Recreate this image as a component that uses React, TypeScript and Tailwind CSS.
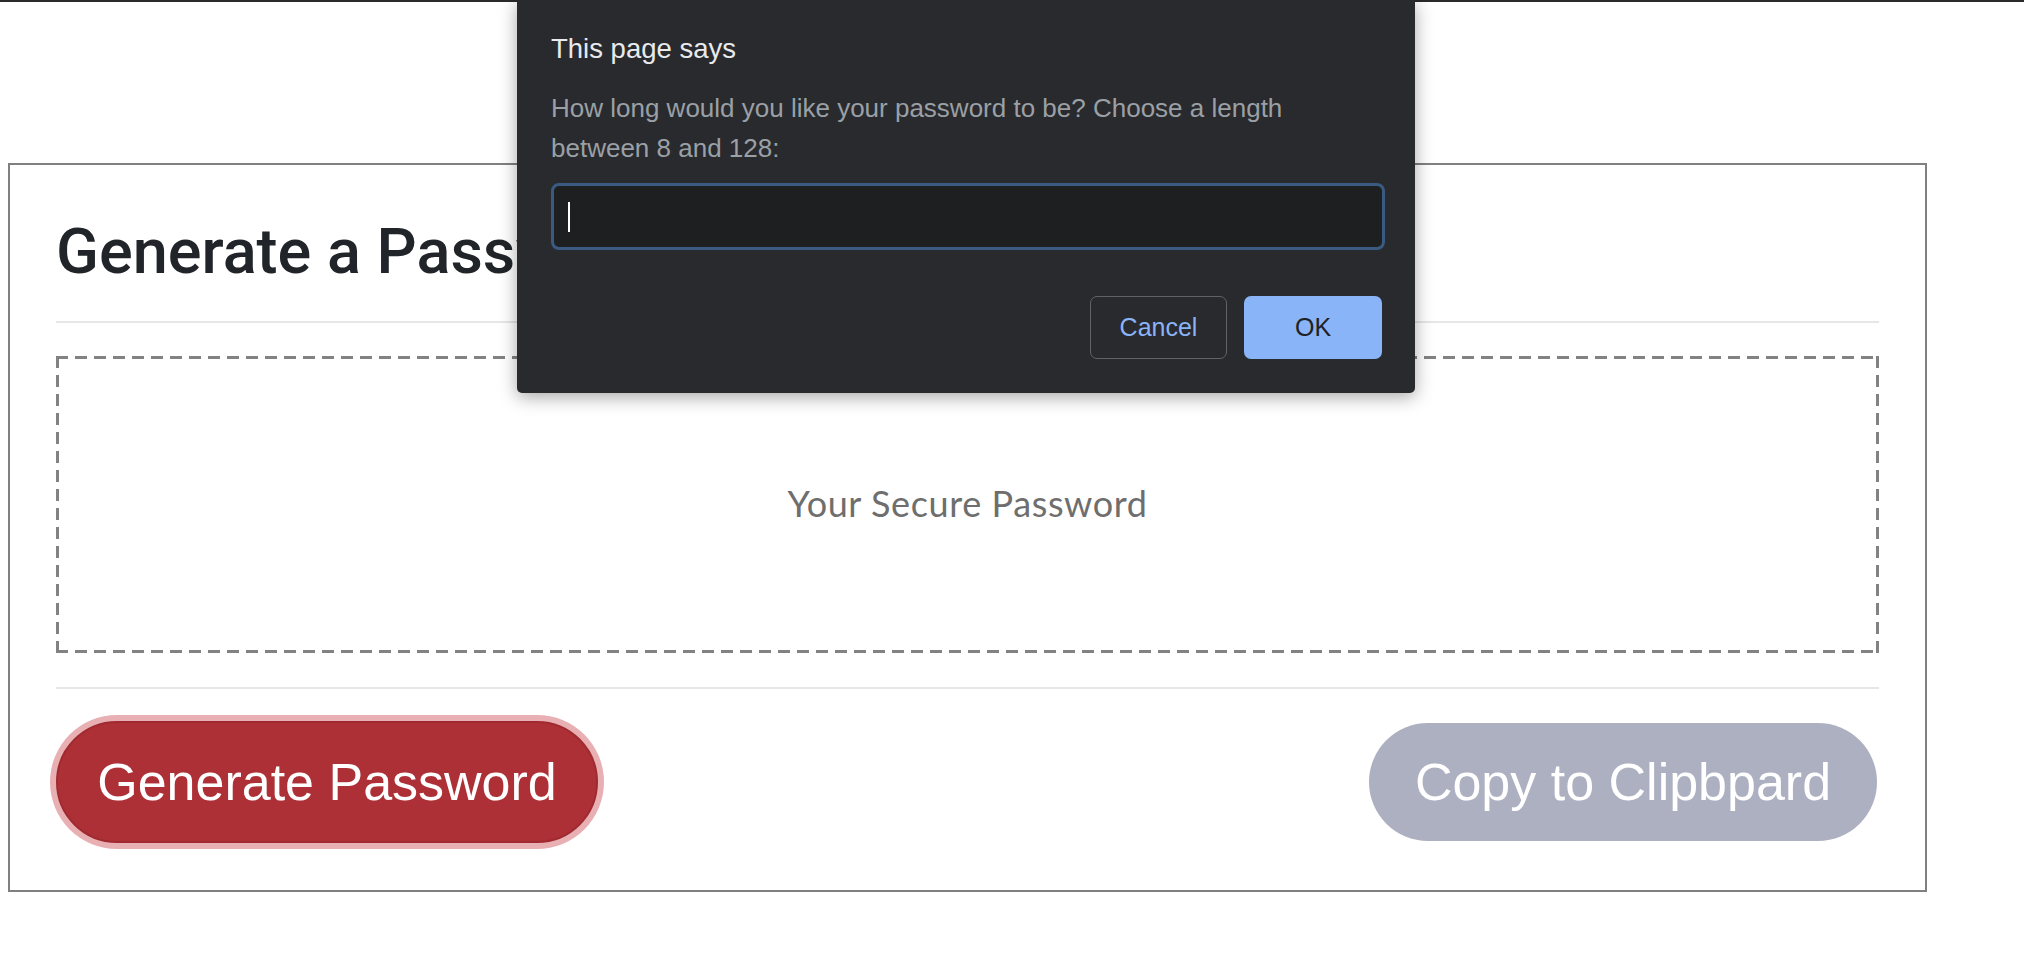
import React from 'react';

const sans = "font-['Liberation_Sans',Arial,sans-serif]";

function PromptDialog() {
  return (
    <div className="absolute left-[517px] top-0 w-[898px] h-[393px] rounded-b-[5px] bg-[#292a2d] shadow-[0_4px_18px_rgba(0,0,0,0.35)] px-[34px] pt-[31px]">
      <div className={`${sans} text-[27.5px] leading-[36px] text-[#e8eaed]`}>This page says</div>
      <p className={`${sans} mt-[21px] w-[800px] text-[26px] leading-[40px] text-[#9aa0a6]`}>
        How long would you like your password to be? Choose a length between 8 and 128:
      </p>
      <div className="mt-[15px] flex h-[67px] w-[834px] items-center rounded-[8px] border-[3px] border-[#3a5b81] bg-[#1e1f21] pl-[14px]">
        <span className="h-[30px] w-[2px] bg-white" />
      </div>
      <div className="mt-[46px] flex w-[831px] justify-end gap-[17px]">
        <button
          type="button"
          className={`${sans} h-[63px] w-[137px] rounded-[7px] border border-[#5f6368] text-[25px] text-[#8ab4f8]`}
        >
          Cancel
        </button>
        <button
          type="button"
          className={`${sans} h-[63px] w-[138px] rounded-[7px] bg-[#8ab4f8] text-[25px] text-[#202124]`}
        >
          OK
        </button>
      </div>
    </div>
  );
}

export default function App() {
  return (
    <div className="relative min-h-[972px] w-[2024px] overflow-hidden bg-white">
      <div className="h-[2px] bg-[#2a2a2a]" />

      <div className="ml-[8px] mt-[161px] h-[729px] w-[1919px] border-2 border-[#808080] px-[46px] pt-[50px]">
        <h1 className="font-['Roboto',Arial,sans-serif] text-[63px] font-medium leading-[74px] text-[#212529]">
          Generate a Password
        </h1>
        <div className="mt-[32px] h-[2px] bg-[#e6e6e6]" />

        {/* dashed frame drawn with gradients so the dash length matches */}
        <div className="mt-[33px] flex h-[297px] items-center justify-center pb-[4px] bg-no-repeat [background-image:repeating-linear-gradient(90deg,#828282_0_12px,transparent_12px_19px),repeating-linear-gradient(90deg,#828282_0_12px,transparent_12px_19px),repeating-linear-gradient(180deg,#828282_0_12px,transparent_12px_19px),repeating-linear-gradient(180deg,#828282_0_12px,transparent_12px_19px)] [background-size:100%_3px,100%_3px,3px_100%,3px_100%] [background-position:0_0,0_100%,0_0,100%_0]">
          <span className="font-['Lato','Open_Sans',sans-serif] text-[36px] tracking-[0.6px] text-[#6e6e6e]">
            Your Secure Password
          </span>
        </div>

        <div className="mt-[34px] h-[2px] bg-[#e6e6e6]" />

        <div className="mt-[32px] flex items-center justify-between">
          <button
            type="button"
            className={`${sans} h-[122px] w-[542px] rounded-full border-2 border-[#9f2a30] bg-[#ad3036] text-[52px] text-white shadow-[0_0_0_6px_#e8b0b3]`}
          >
            Generate Password
          </button>
          <button
            type="button"
            className={`${sans} mr-[2px] h-[118px] w-[508px] rounded-full bg-[#adb0c0] text-[52px] text-white`}
          >
            Copy to Clipbpard
          </button>
        </div>
      </div>

      <PromptDialog />
    </div>
  );
}
